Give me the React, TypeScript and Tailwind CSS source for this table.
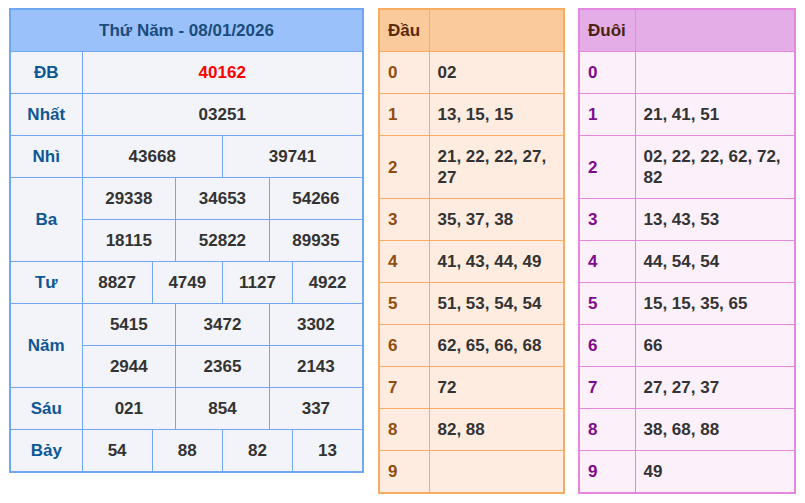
import type { FC } from 'react';

const font = { fontFamily: '"Liberation Sans", Arial, sans-serif' };

interface PrizeRow {
    label: string;
    rows: string[][];
    red?: boolean;
}

const prizes: PrizeRow[] = [
    { label: 'ĐB', rows: [['40162']], red: true },
    { label: 'Nhất', rows: [['03251']] },
    { label: 'Nhì', rows: [['43668', '39741']] },
    {
        label: 'Ba',
        rows: [
            ['29338', '34653', '54266'],
            ['18115', '52822', '89935'],
        ],
    },
    { label: 'Tư', rows: [['8827', '4749', '1127', '4922']] },
    {
        label: 'Năm',
        rows: [
            ['5415', '3472', '3302'],
            ['2944', '2365', '2143'],
        ],
    },
    { label: 'Sáu', rows: [['021', '854', '337']] },
    { label: 'Bảy', rows: [['54', '88', '82', '13']] },
];

const dau: string[] = [
    '02',
    '13, 15, 15',
    '21, 22, 22, 27, 27',
    '35, 37, 38',
    '41, 43, 44, 49',
    '51, 53, 54, 54',
    '62, 65, 66, 68',
    '72',
    '82, 88',
    '',
];

const duoi: string[] = [
    '',
    '21, 41, 51',
    '02, 22, 22, 62, 72, 82',
    '13, 43, 53',
    '44, 54, 54',
    '15, 15, 35, 65',
    '66',
    '27, 27, 37',
    '38, 68, 88',
    '49',
];

const ResultTable: FC = () => (
    <table className="w-[355px] table-fixed border-collapse border-2 border-[#70a6f2] text-[17px] font-bold leading-[21px]">
        <colgroup>
            <col className="w-[72px]" />
            {Array.from({ length: 12 }, (_, i) => (
                <col key={i} />
            ))}
        </colgroup>
        <thead>
            <tr>
                <th
                    colSpan={13}
                    className="border border-[#70a6f2] bg-[#9bc1fa] py-[10px] text-center text-[#1a4c7d]"
                >
                    Thứ Năm - 08/01/2026
                </th>
            </tr>
        </thead>
        <tbody className="bg-[#f3f4f9]">
            {prizes.map((prize) =>
                prize.rows.map((row, rowIdx) => (
                    <tr key={`${prize.label}-${rowIdx}`}>
                        {rowIdx === 0 && (
                            <td
                                rowSpan={prize.rows.length}
                                className="border border-[#70a6f2] py-[10px] text-center text-[#0d5795]"
                            >
                                {prize.label}
                            </td>
                        )}
                        {row.map((num, idx) => (
                            <td
                                key={idx}
                                colSpan={12 / row.length}
                                className={`border border-[#70a6f2] py-[10px] text-center ${
                                    prize.red ? 'text-[#ff0000]' : 'text-[#333333]'
                                }`}
                            >
                                {num}
                            </td>
                        ))}
                    </tr>
                )),
            )}
        </tbody>
    </table>
);

const DauTable: FC = () => (
    <table className="w-[187px] table-fixed border-collapse border-2 border-[#f7ac63] text-[17px] font-bold leading-[21px]">
        <colgroup>
            <col className="w-[50px]" />
            <col />
        </colgroup>
        <thead>
            <tr className="bg-[#fbca9b]">
                <th className="border border-[#f7ac63] px-2 py-[10px] text-left text-[#5a2a0b]">Đầu</th>
                <th className="border border-[#f7ac63]" />
            </tr>
        </thead>
        <tbody className="bg-[#feece0]">
            {dau.map((val, idx) => (
                <tr key={idx}>
                    <td className="border border-[#f7ac63] px-2 py-[10px] align-middle text-[#914d0f]">{idx}</td>
                    <td className="border border-[#f7ac63] px-2 py-[10px] text-[#333333]">{val}</td>
                </tr>
            ))}
        </tbody>
    </table>
);

const DuoiTable: FC = () => (
    <table className="w-[218px] table-fixed border-collapse border-2 border-[#e487df] text-[17px] font-bold leading-[21px]">
        <colgroup>
            <col className="w-[56px]" />
            <col />
        </colgroup>
        <thead>
            <tr className="bg-[#e5ade7]">
                <th className="border border-[#e487df] px-2 py-[10px] text-left text-[#4a230e]">Đuôi</th>
                <th className="border border-[#e487df]" />
            </tr>
        </thead>
        <tbody className="bg-[#fcf0fa]">
            {duoi.map((val, idx) => (
                <tr key={idx}>
                    <td className="border border-[#e487df] px-2 py-[10px] align-middle text-[#800b8a]">{idx}</td>
                    <td className="border border-[#e487df] px-2 py-[10px] text-[#333333]">{val}</td>
                </tr>
            ))}
        </tbody>
    </table>
);

export default function App() {
    return (
        <div className="min-h-screen bg-white" style={font}>
            <div className="flex items-start pl-[9px] pt-[8px]">
                <ResultTable />
                <div className="ml-[14px]">
                    <DauTable />
                </div>
                <div className="ml-[13px]">
                    <DuoiTable />
                </div>
            </div>
        </div>
    );
}
